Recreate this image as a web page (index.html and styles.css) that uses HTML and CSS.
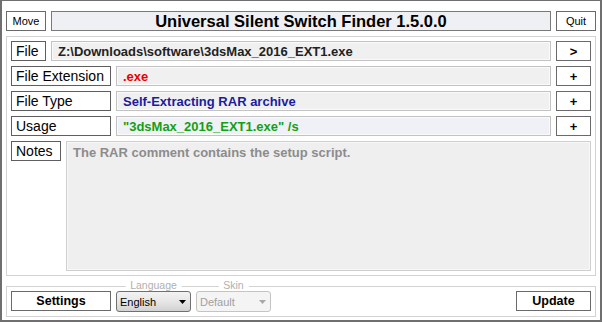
FILE: index.html
```html
<!DOCTYPE html>
<html>
<head>
<meta charset="utf-8">
<link rel="stylesheet" href="styles.css">
</head>
<body>
<div class="window">
  <div class="topbar">
    <div class="btn small">Move</div>
    <div class="title">Universal Silent Switch Finder 1.5.0.0</div>
    <div class="btn small">Quit</div>
  </div>
  <div class="panel">
    <div class="row">
      <div class="label w-file">File</div>
      <div class="field c-path">Z:\Downloads\software\3dsMax_2016_EXT1.exe</div>
      <div class="btn act">&gt;</div>
    </div>
    <div class="row">
      <div class="label w-wide">File Extension</div>
      <div class="field c-ext">.exe</div>
      <div class="btn act">+</div>
    </div>
    <div class="row">
      <div class="label w-wide">File Type</div>
      <div class="field c-type">Self-Extracting RAR archive</div>
      <div class="btn act">+</div>
    </div>
    <div class="row">
      <div class="label w-wide">Usage</div>
      <div class="field c-usage blueish">"3dsMax_2016_EXT1.exe" /s</div>
      <div class="btn act">+</div>
    </div>
    <div class="row notes-row">
      <div class="label w-notes">Notes</div>
      <div class="notes">The RAR comment contains the setup script.</div>
    </div>
  </div>
  <div class="bottom">
    <div class="btn big w-settings">Settings</div>
    <div class="selgroup">
      <span class="legend">Language</span>
      <div class="select">
        <span>English</span>
        <svg width="7" height="4" viewBox="0 0 7 4"><path d="M0 0H7L3.5 4Z" fill="#000"/></svg>
      </div>
    </div>
    <div class="selgroup">
      <span class="legend">Skin</span>
      <div class="select disabled">
        <span>Default</span>
        <svg width="7" height="4" viewBox="0 0 7 4"><path d="M0 0H7L3.5 4Z" fill="#a8a8a8"/></svg>
      </div>
    </div>
    <div class="btn big w-update">Update</div>
  </div>
</div>
</body>
</html>
```
FILE: styles.css
```css
* { box-sizing: border-box; }
html, body { margin: 0; padding: 0; background: #fff; }
body { font-family: "Liberation Sans", Arial, sans-serif; color: #000; }

.window {
  width: 602px;
  height: 322px;
  border: 2px solid #6f6f6f;
  border-top-width: 1px;
  padding: 10px 4px 0 4px;
  display: flex;
  flex-direction: column;
  background: #fff;
}

.topbar {
  display: flex;
  gap: 5px;
  height: 20px;
}

.btn {
  background: #fff;
  border: 1px solid #6a6a6a;
  display: flex;
  align-items: center;
  justify-content: center;
  flex: none;
}
.btn.small { width: 40px; height: 20px; font-size: 11px; }
.btn.act { width: 35px; height: 20px; font-size: 13px; font-weight: bold; }
.btn.big { height: 20px; font-size: 12.5px; font-weight: bold; }
.w-settings { width: 100px; }
.w-update { width: 75px; margin-left: auto; }

.title {
  flex: 1;
  border: 1px solid #7a7a7a;
  background: #eff0f4;
  display: flex;
  align-items: center;
  justify-content: center;
  font-size: 16.5px;
  font-weight: bold;
}

.panel {
  margin-top: 5px;
  height: 240px;
  border: 1px solid #d2d2d2;
  padding: 4px;
  display: flex;
  flex-direction: column;
  gap: 5px;
}

.row {
  display: flex;
  gap: 5px;
  height: 20px;
  flex: none;
}
.notes-row { flex: 1; height: auto; }

.label {
  height: 20px;
  border: 1px solid #5e5e5e;
  background: #fff;
  font-size: 14px;
  padding-left: 4px;
  display: flex;
  align-items: center;
  flex: none;
  white-space: nowrap;
}
.w-file { width: 35px; }
.w-wide { width: 100px; }
.w-notes { width: 50px; }

.field {
  flex: 1;
  height: 20px;
  border: 1px solid #c2c2c2;
  box-shadow: inset 0 0 0 1px #fafafa;
  background: #f0f0f0;
  font-size: 13px;
  font-weight: bold;
  padding-left: 6px;
  display: flex;
  align-items: center;
  white-space: nowrap;
}
.field.blueish { background: #eff1f6; }
.c-path { color: #222; }
.c-ext { color: #e80000; }
.c-type { color: #1c1c9c; }
.c-usage { color: #14a014; }

.notes {
  flex: 1;
  border: 1px solid #cfcfcf;
  box-shadow: inset 0 0 0 1px #f8f8f8;
  background: #efefef;
  color: #8c8c8c;
  font-size: 13px;
  font-weight: bold;
  padding: 3px 6px;
  line-height: 16px;
}

.bottom {
  margin-top: 10px;
  height: 31px;
  border: 1px solid #d2d2d2;
  padding: 4px;
  display: flex;
  gap: 5px;
  align-items: flex-start;
}

.selgroup {
  position: relative;
  width: 75px;
  height: 21px;
  flex: none;
}
.legend {
  position: absolute;
  top: -12px;
  left: 50%;
  transform: translateX(-50%);
  background: #fff;
  padding: 0 5px;
  font-size: 10.5px;
  line-height: 12px;
  color: #b0b0b0;
  white-space: nowrap;
}
.select {
  width: 75px;
  height: 21px;
  border: 1px solid #707070;
  border-radius: 3px;
  background: linear-gradient(#f3f3f3, #e6e6e6 50%, #d2d2d2);
  display: flex;
  align-items: center;
  justify-content: space-between;
  padding: 0 3px 0 3px;
  font-size: 11px;
  color: #000;
}
.select svg { display: block; margin-right: 1px; }
.select.disabled {
  border-color: #c4c4c4;
  background: #f4f4f4;
  color: #a0a0a0;
}
```
